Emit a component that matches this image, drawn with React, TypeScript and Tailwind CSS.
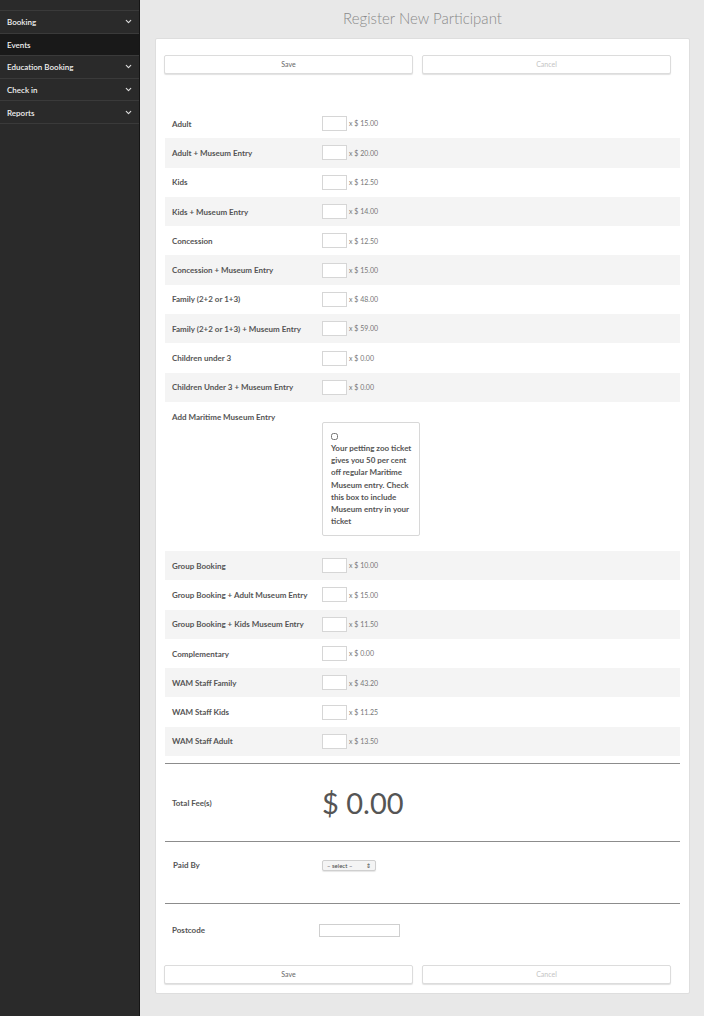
import { ChevronDown } from 'lucide-react';

const tickets = [
  { label: 'Adult', price: '15.00' },
  { label: 'Adult + Museum Entry', price: '20.00' },
  { label: 'Kids', price: '12.50' },
  { label: 'Kids + Museum Entry', price: '14.00' },
  { label: 'Concession', price: '12.50' },
  { label: 'Concession + Museum Entry', price: '15.00' },
  { label: 'Family (2+2 or 1+3)', price: '48.00' },
  { label: 'Family (2+2 or 1+3) + Museum Entry', price: '59.00' },
  { label: 'Children under 3', price: '0.00' },
  { label: 'Children Under 3 + Museum Entry', price: '0.00' },
];

const groupTickets = [
  { label: 'Group Booking', price: '10.00' },
  { label: 'Group Booking + Adult Museum Entry', price: '15.00' },
  { label: 'Group Booking + Kids Museum Entry', price: '11.50' },
  { label: 'Complementary', price: '0.00' },
  { label: 'WAM Staff Family', price: '43.20' },
  { label: 'WAM Staff Kids', price: '11.25' },
  { label: 'WAM Staff Adult', price: '13.50' },
];

const menu = [
  { label: 'Booking', chevron: true },
  { label: 'Events', chevron: false, active: true },
  { label: 'Education Booking', chevron: true },
  { label: 'Check in', chevron: true },
  { label: 'Reports', chevron: true },
];

function Sidebar() {
  return (
    <aside className="w-[140px] shrink-0 bg-[#2a2a2a] border-r border-[#151515] min-h-[1016px]">
      <div className="h-[11px] border-b border-[#3a3a3a]" />
      {menu.map((item) => (
        <div
          key={item.label}
          className={`h-[22.6px] flex items-center justify-between pl-[7px] pr-[6px] border-b border-[#3a3a3a] text-[8px] font-semibold text-[#f0f0f0] ${
            item.active ? 'bg-[#191919]' : ''
          }`}
        >
          <span className="pt-[1px]">{item.label}</span>
          {item.chevron && <ChevronDown size={9} strokeWidth={3} className="text-[#ddd]" />}
        </div>
      ))}
    </aside>
  );
}

function Buttons() {
  return (
    <div className="grid grid-cols-2 gap-[9px] ml-[8px] w-[507px]">
      <button className="h-[19px] bg-white border border-[#dcdcdc] rounded-[2px] shadow-[0_1px_1px_rgba(0,0,0,0.12)] text-[7px] text-[#666]">
        Save
      </button>
      <button className="h-[19px] bg-white border border-[#dcdcdc] rounded-[2px] shadow-[0_1px_1px_rgba(0,0,0,0.12)] text-[7px] text-[#c4c4c4]">
        Cancel
      </button>
    </div>
  );
}

function TicketRow({ label, price, striped }: { label: string; price: string; striped: boolean }) {
  return (
    <div className={`h-[29.3px] flex items-center ${striped ? 'bg-[#f4f4f4]' : 'bg-white'}`}>
      <div className="w-[157px] pl-[7px] text-[8px] font-bold text-[#555]">{label}</div>
      <input className="w-[25px] h-[15px] bg-white border border-[#d6d6d6] outline-none" />
      <span className="ml-[2px] text-[7px] text-[#777]">x $ {price}</span>
    </div>
  );
}

export default function App() {
  return (
    <div className="flex min-h-[1016px] bg-[#e8e8e8] font-['Lato','Liberation_Sans',sans-serif]">
      <Sidebar />
      <main className="flex-1 pl-[15px] pr-[14px]">
        <h1 className="h-[38px] pt-[7px] text-center text-[15px] font-light text-[#8a8a8a]">
          Register New Participant
        </h1>
        <div className="bg-white border border-[#dedede] rounded-[2px] pt-[16px] pb-[9px]">
          <Buttons />

          <div className="mt-[35px] mx-[9px]">
            {tickets.map((t, i) => (
              <TicketRow key={t.label} label={t.label} price={t.price} striped={i % 2 === 1} />
            ))}

            <div className="h-[149px] flex bg-white">
              <div className="w-[157px] pl-[7px] pt-[9px] text-[8px] font-bold text-[#555]">
                Add Maritime Museum Entry
              </div>
              <div className="mt-[20px] w-[98px] h-[114px] border border-[#d8d8d8] rounded-[2px] pl-[8px] pr-[3px] pt-[10px]">
                <input type="checkbox" className="w-[7px] h-[7px] block" />
                <p className="mt-[2px] text-[8px] leading-[12.2px] font-bold text-[#555]">
                  Your petting zoo ticket gives you 50 per cent off regular Maritime Museum entry. Check this box to include Museum entry in your ticket
                </p>
              </div>
            </div>

            {groupTickets.map((t, i) => (
              <TicketRow key={t.label} label={t.label} price={t.price} striped={i % 2 === 0} />
            ))}
          </div>

          <div className="mx-[9px] mt-[7px] border-t border-[#8c8c8c]" />
          <div className="h-[77px] mx-[9px] flex items-center">
            <div className="w-[157px] pl-[7px] text-[8px] font-bold text-[#555]">Total Fee(s)</div>
            <div className="text-[29px] font-normal text-[#555] leading-none">$ 0.00</div>
          </div>

          <div className="mx-[9px] border-t border-[#8c8c8c]" />
          <div className="h-[61px] mx-[9px] flex items-center pb-[15px]">
            <div className="w-[157px] pl-[8px] text-[8px] font-bold text-[#555]">Paid By</div>
            <div className="w-[54px] h-[11px] flex items-center justify-between px-[4px] bg-[#f4f4f4] border border-[#cfcfcf] rounded-[2px] shadow-[0_1px_1px_rgba(0,0,0,0.1)] text-[6px] text-[#444]">
              <span>– select –</span>
              <span className="text-[6px]">⇕</span>
            </div>
          </div>

          <div className="mx-[9px] border-t border-[#8c8c8c]" />
          <div className="h-[52px] mx-[9px] flex items-center">
            <div className="w-[154px] pl-[7px] text-[8px] font-bold text-[#555]">Postcode</div>
            <input className="w-[81px] h-[13px] bg-white border border-[#cfcfcf] outline-none" />
          </div>

          <div className="mt-[9px]">
            <Buttons />
          </div>
        </div>
      </main>
    </div>
  );
}
